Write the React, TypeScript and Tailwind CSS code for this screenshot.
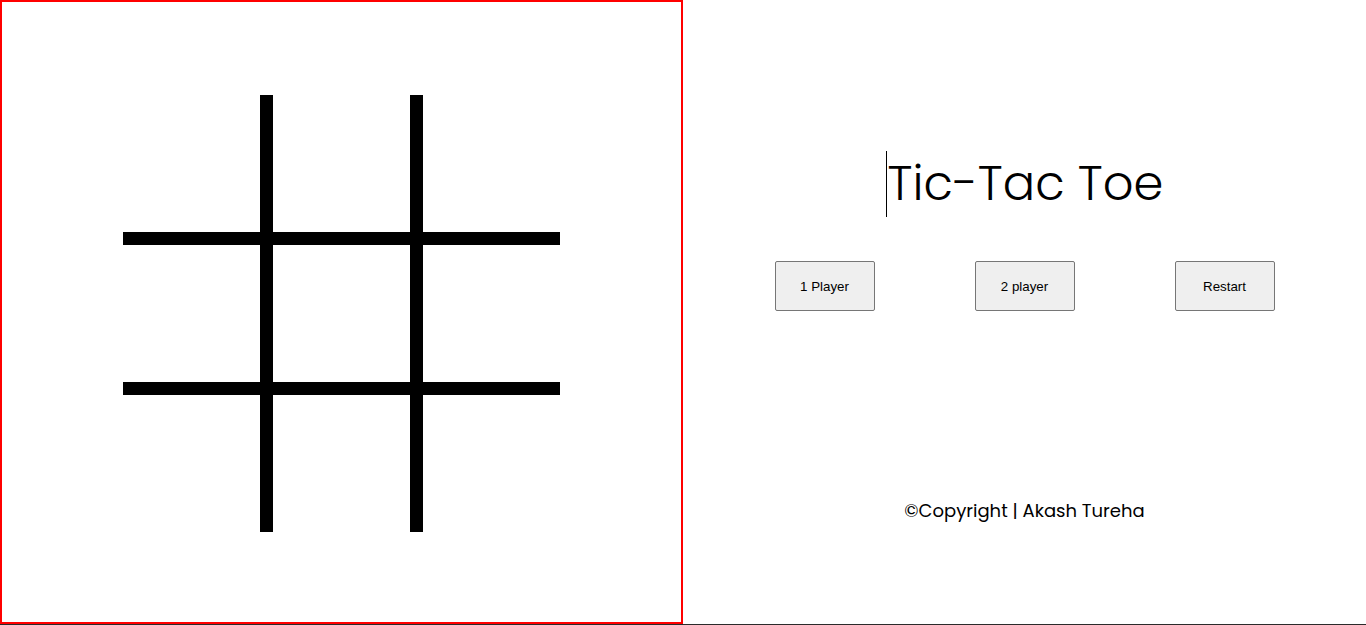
import React from "react";

const cells = Array.from({ length: 9 }, (_, i) => i);

export default function App() {
  return (
    <div className="w-[1366px] h-[625px] bg-white flex flex-col overflow-hidden">
      <div className="flex h-[624px]">
        {/* board */}
        <div className="w-[683px] h-[624px] border-2 border-[#ff0000] flex items-center justify-center">
          <div className="mt-[2px] grid grid-cols-[137px_137px_137px] grid-rows-[137px_137px_137px] gap-[13px] bg-black">
            {cells.map((c) => (
              <div key={c} className="bg-white" />
            ))}
          </div>
        </div>

        {/* side panel */}
        <div className="w-[683px] flex flex-col items-center pt-[151px]">
          <div className="flex items-start h-[66px]">
            <span className="inline-block w-px h-[66px] bg-black mr-[1px]" />
            <h1 className="text-[48px] leading-[66px] font-light text-black [font-family:Poppins,Inter,'Noto_Sans',sans-serif]">
              Tic-Tac Toe
            </h1>
          </div>

          <div className="flex gap-[100px] mt-[44px]">
            {["1 Player", "2 player", "Restart"].map((label) => (
              <button
                key={label}
                className="w-[100px] h-[50px] pt-[2px] bg-[#efefef] border border-[#767676] rounded-[2px] text-[13.333px] text-black [font-family:'Liberation_Sans',Arial,sans-serif]"
              >
                {label}
              </button>
            ))}
          </div>

          <p className="mt-[186px] text-[18px] leading-[27px] text-black [font-family:Poppins,Inter,'Noto_Sans',sans-serif]">
            ©Copyright | Akash Tureha
          </p>
        </div>
      </div>
      <div className="h-px bg-[#2b2b2b]" />
    </div>
  );
}
